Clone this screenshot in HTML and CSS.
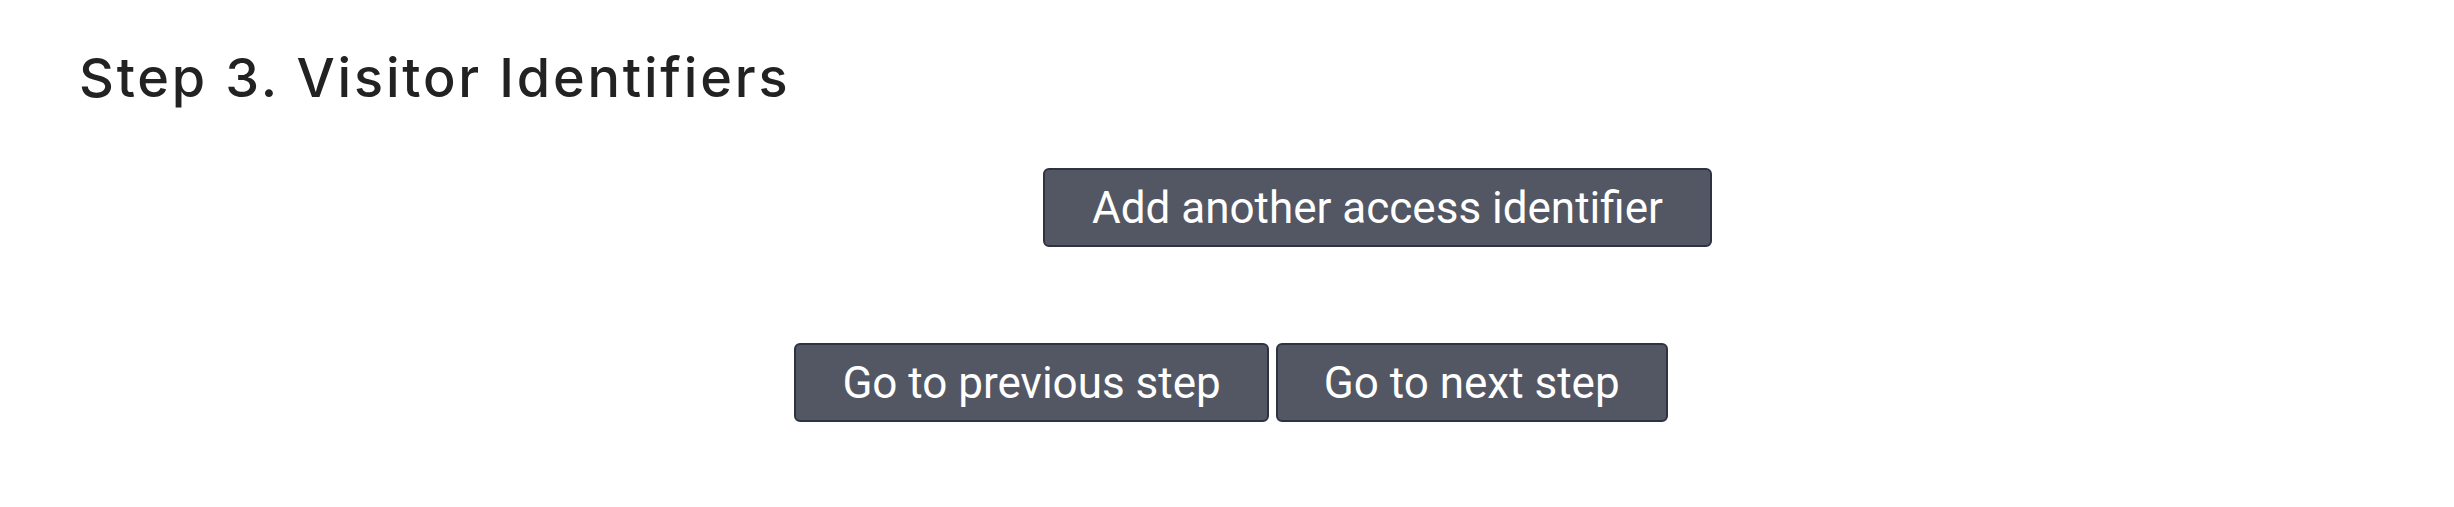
FILE: index.html
```html
<!DOCTYPE html>
<html lang="en">
<head>
<meta charset="utf-8">
<title>Step 3. Visitor Identifiers</title>
<link rel="stylesheet" href="styles.css">
</head>
<body>
<main class="page">
  <h2 class="step-title">Step 3. Visitor Identifiers</h2>
  <div class="add-row">
    <button class="btn" type="button">Add another access identifier</button>
  </div>
  <div class="nav-row">
    <button class="btn btn-nav" type="button">Go to previous step</button>
    <button class="btn btn-nav" type="button">Go to next step</button>
  </div>
</main>
</body>
</html>
```

FILE: styles.css
```css
html, body {
  margin: 0;
  padding: 0;
  background: #ffffff;
}

.page {
  width: 2454px;
  padding-top: 43px;
}

.step-title {
  margin: 0 0 0 79px;
  font-family: "Inter", "Noto Sans", sans-serif;
  font-weight: 500;
  font-size: 54px;
  line-height: 70px;
  color: #222222;
  letter-spacing: 2.8px;
}

.add-row {
  display: flex;
  padding-left: 1043px;
  margin-top: 55px;
}

.nav-row {
  display: flex;
  justify-content: center;
  gap: 7px;
  margin-top: 96px;
  padding-left: 8px;
}

.btn {
  box-sizing: border-box;
  height: 79px;
  padding: 0 47px;
  background: #535764;
  border: 2px solid #2f3240;
  border-radius: 6px;
  color: #ffffff;
  font-family: "Roboto", "Liberation Sans", sans-serif;
  font-size: 44px;
  font-weight: 400;
  line-height: 1;
  cursor: pointer;
}

.btn-nav {
  padding: 0 46px;
}
```
